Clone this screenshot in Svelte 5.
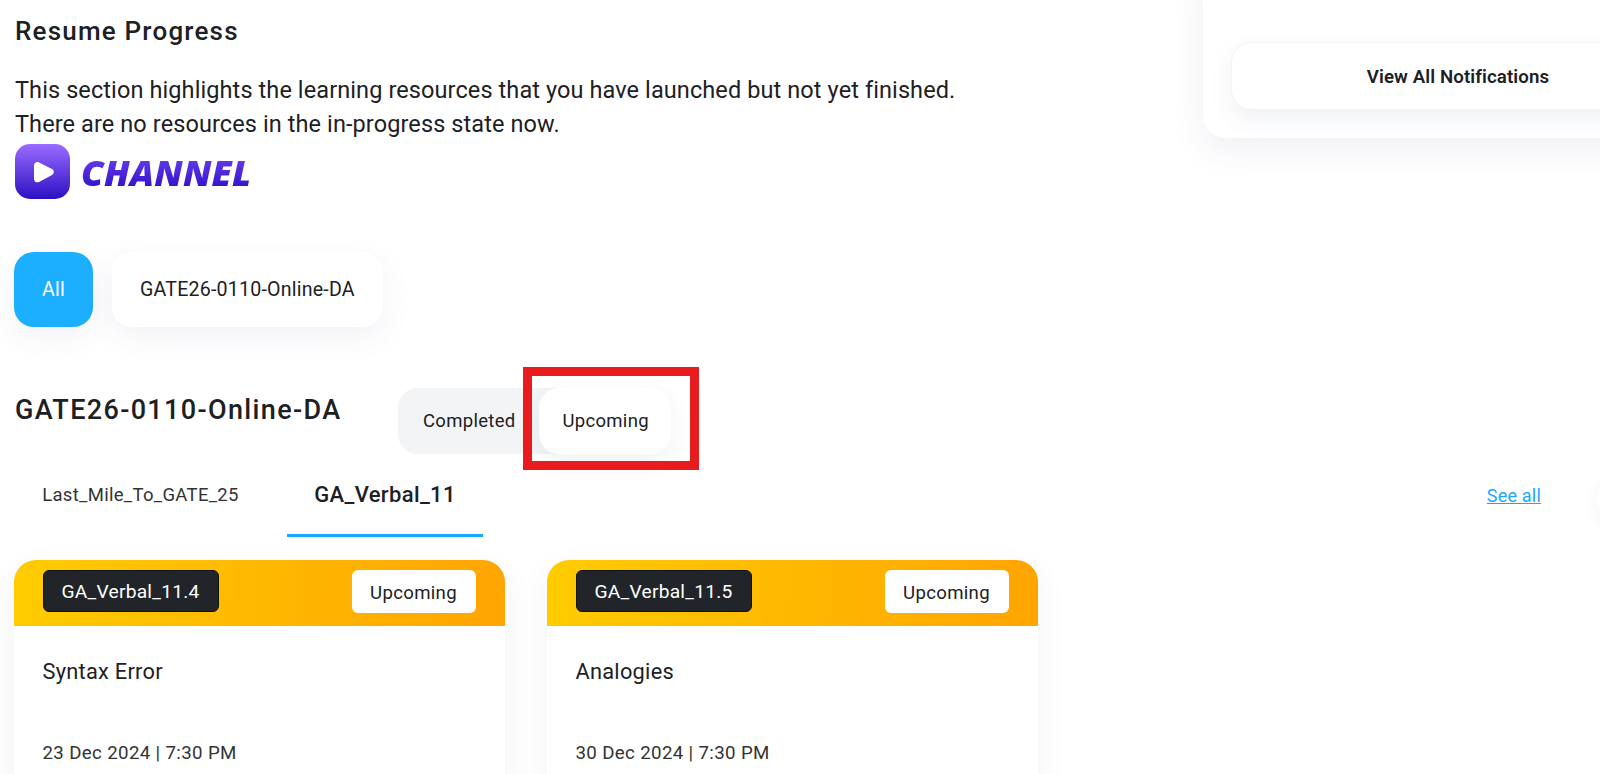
<script>
  const cards = [
    { code: 'GA_Verbal_11.4', status: 'Upcoming', title: 'Syntax Error', date: '23 Dec 2024 | 7:30 PM' },
    { code: 'GA_Verbal_11.5', status: 'Upcoming', title: 'Analogies', date: '30 Dec 2024 | 7:30 PM' }
  ];
</script>

<div class="page">
  <aside class="notif">
    <button class="viewall">View All Notifications</button>
  </aside>

  <h2 class="resume">Resume Progress</h2>
  <p class="desc">This section highlights the learning resources that you have launched but not yet finished.<br />There are no resources in the in-progress state now.</p>

  <div class="logo">
    <svg width="55" height="55" viewBox="0 0 55 55">
      <defs>
        <linearGradient id="lg" x1="0" y1="0" x2="0" y2="1">
          <stop offset="0" stop-color="#9a6cff" />
          <stop offset="1" stop-color="#2d0fc4" />
        </linearGradient>
      </defs>
      <rect width="55" height="55" rx="15" fill="url(#lg)" />
      <path d="M19 21.5c0-2.6 2.7-4.2 5-3l13 6.5c2.400 1.200 2.400 4.700 0 5.900l-13 7c-2.300 1.200-5-.4-5-3z" fill="#fff" />
    </svg>
    <span class="wordmark">CHANNEL</span>
  </div>

  <div class="chips">
    <button class="chip active">All</button>
    <button class="chip">GATE26-0110-Online-DA</button>
  </div>

  <div class="head">
    <h3 class="batch">GATE26-0110-Online-DA</h3>
    <div class="toggle">
      <span class="opt">Completed</span>
      <span class="opt on">Upcoming<i class="mark"></i></span>
    </div>
  </div>

  <div class="tabs">
    <span class="tab first">Last_Mile_To_GATE_25</span>
    <span class="tab sel">GA_Verbal_11</span>
    <a class="seeall" href="#top">See all</a>
    <span class="nextbtn"></span>
  </div>

  <div class="cards">
    {#each cards as c}
      <article class="card">
        <header class="chead">
          <span class="code">{c.code}</span>
          <span class="status">{c.status}</span>
        </header>
        <div class="cbody">
          <div class="ctitle">{c.title}</div>
          <div class="cdate">{c.date}</div>
        </div>
      </article>
    {/each}
  </div>
</div>

<style>
  :global(body) { margin: 0; background: #fff; overflow: hidden; }
  .page {
    position: relative;
    height: 774px;
    overflow: hidden;
    box-sizing: border-box;
    padding: 15px 0 0 15px;
    font-family: Roboto, "Liberation Sans", sans-serif;
    color: #1d2024;
  }
  .notif {
    position: absolute;
    top: -40px;
    left: 1203px;
    width: 460px;
    height: 178px;
    box-sizing: border-box;
    padding: 82px 28px 0;
    background: #fff;
    border-radius: 22px;
    box-shadow: 0 12px 34px rgba(60, 70, 130, 0.08);
  }
  .viewall {
    display: block;
    width: 100%;
    height: 68px;
    box-sizing: border-box;
    padding: 2px 0 0 50px;
    background: #fff;
    border: 1px solid #f1f4f6;
    border-radius: 20px;
    box-shadow: 0 10px 24px rgba(60, 70, 130, 0.07);
    font: 600 18.7px Roboto, sans-serif;
    letter-spacing: 0.1px;
    color: #1d2024;
  }
  .resume {
    margin: 0;
    font-size: 26px;
    line-height: 32px;
    font-weight: 500;
    letter-spacing: 1.2px;
  }
  .desc {
    margin: 26px 0 0;
    font-size: 23.5px;
    line-height: 34px;
    font-weight: 400;
    letter-spacing: 0.1px;
  }
  .logo {
    display: flex;
    align-items: center;
    gap: 11px;
    margin-top: 3px;
    height: 55px;
  }
  .wordmark {
    font-family: "Open Sans", sans-serif;
    font-style: italic;
    font-weight: 800;
    font-size: 36px;
    line-height: 40px;
    letter-spacing: 0.2px;
    background: linear-gradient(180deg, #6f42f0, #2a0cc4);
    -webkit-background-clip: text;
    background-clip: text;
    color: transparent;
    margin-top: 2px;
  }
  .chips {
    display: flex;
    gap: 19px;
    margin: 53px 0 0 -1px;
  }
  .chip {
    height: 75px;
    border: 0;
    border-radius: 20px;
    padding: 0 28px;
    background: #fff;
    font: 400 19.6px Roboto, sans-serif;
    letter-spacing: 0.2px;
    color: #1d2024;
    box-shadow: 0 10px 30px rgba(60, 70, 130, 0.07);
  }
  .chip.active {
    width: 79px;
    padding: 0;
    background: #1cafff;
    color: #fff;
  }
  .head {
    display: flex;
    align-items: flex-start;
    margin-top: 61px;
  }
  .batch {
    margin: 5px 0 0;
    width: 383px;
    font-size: 27px;
    line-height: 34px;
    font-weight: 500;
    letter-spacing: 1.35px;
  }
  .toggle {
    display: flex;
    align-items: center;
    height: 66px;
    border-radius: 20px;
    background: #f3f4f6;
  }
  .opt {
    font-size: 18.5px;
    letter-spacing: 0.3px;
    padding: 0 23px 0 25px;
  }
  .opt.on {
    position: relative;
    display: flex;
    align-items: center;
    height: 66px;
    box-sizing: border-box;
    padding: 0 22px 0 24px;
    background: #fff;
    border-radius: 20px;
    box-shadow: 0 8px 24px rgba(60, 70, 130, 0.07);
  }
  .mark {
    position: absolute;
    top: -21px;
    bottom: -16px;
    left: -16px;
    right: -28px;
    border: 9px solid #e81c1f;
  }
  .tabs {
    display: flex;
    align-items: flex-start;
    height: 83px;
    margin-left: -15px;
    position: relative;
  }
  .tab {
    box-sizing: border-box;
    height: 83px;
    padding-top: 28px;
    line-height: 26px;
    font-size: 18.5px;
    letter-spacing: 0.3px;
    text-align: center;
  }
  .tab.first { width: 287px; padding-right: 6px; color: #333; }
  .tab.sel {
    width: 196px;
    font-size: 22px;
    font-weight: 500;
    letter-spacing: 0.35px;
    border-bottom: 3px solid #1aa7ff;
    color: #1d2024;
  }
  .seeall {
    margin-left: auto;
    margin-right: 59px;
    margin-top: 29px;
    line-height: 26px;
    font-size: 18px;
    letter-spacing: 0.2px;
    color: #1aa7ff;
  }
  .nextbtn {
    position: absolute;
    right: -45px;
    top: 22px;
    width: 48px;
    height: 48px;
    border-radius: 50%;
    background: #fff;
    box-shadow: 0 4px 18px rgba(60, 70, 130, 0.06);
  }
  .cards {
    display: flex;
    gap: 42.5px;
    margin: 23px 0 0 -1px;
  }
  .card {
    width: 490.5px;
    height: 260px;
    border-radius: 22px;
    background: #fff;
    box-shadow: 0 10px 30px rgba(60, 70, 130, 0.07);
    overflow: hidden;
    flex: none;
  }
  .chead {
    display: flex;
    align-items: center;
    justify-content: space-between;
    height: 66px;
    box-sizing: border-box;
    padding: 0 29px 4px 28.5px;
    background: linear-gradient(95deg, #ffcc00, #ffa500);
  }
  .code {
    display: flex;
    align-items: center;
    justify-content: center;
    width: 176px;
    height: 42px;
    box-sizing: border-box;
    background: #212529;
    border: 1px solid #111;
    border-radius: 6px;
    color: #fff;
    font-size: 19.2px;
    letter-spacing: 0.25px;
  }
  .status {
    display: flex;
    align-items: center;
    justify-content: center;
    width: 124px;
    height: 43px;
    box-sizing: border-box;
    padding-top: 3px;
    background: #fff;
    border-radius: 6px;
    font-size: 18.6px;
    letter-spacing: 0.3px;
  }
  .cbody { padding: 32px 28px 0 28.5px; }
  .ctitle {
    font-size: 21.8px;
    line-height: 28px;
    letter-spacing: 0.25px;
  }
  .cdate {
    margin-top: 53px;
    font-size: 18.7px;
    line-height: 28px;
    letter-spacing: 0.35px;
    color: #333;
  }
</style>
